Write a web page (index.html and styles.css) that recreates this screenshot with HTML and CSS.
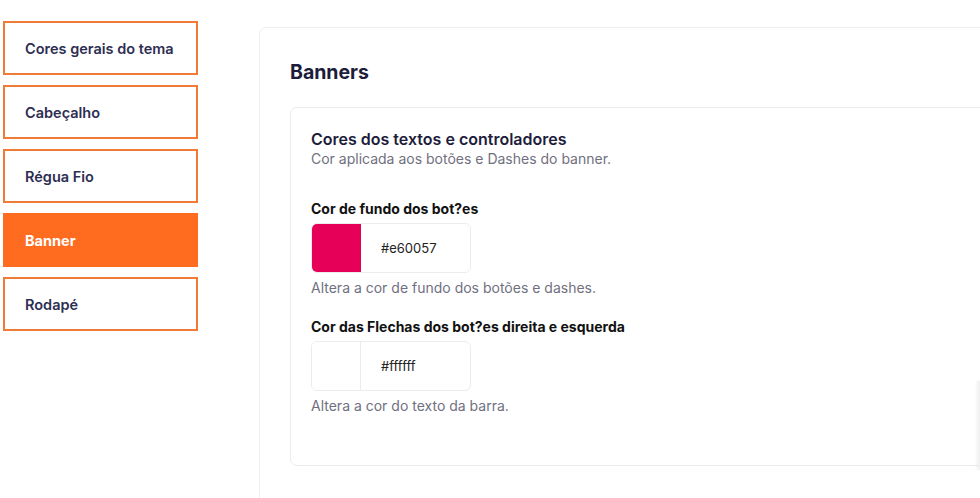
FILE: index.html
```html
<!DOCTYPE html>
<html>
<head>
    <link rel="stylesheet" href="styles.css">
</head>
<body>
    <div class="layout">
        <nav class="sidebar">
            <a class="nav-item">Cores gerais do tema</a>
            <a class="nav-item">Cabeçalho</a>
            <a class="nav-item">Régua Fio</a>
            <a class="nav-item active">Banner</a>
            <a class="nav-item">Rodapé</a>
        </nav>

        <main class="panel">
            <h2 class="panel-title">Banners</h2>

            <section class="card">
                <h3 class="card-title">Cores dos textos e controladores</h3>
                <p class="card-desc">Cor aplicada aos botões e Dashes do banner.</p>

                <div class="field first">
                    <label class="field-label">Cor de fundo dos bot?es</label>
                    <div class="color-input">
                        <span class="swatch swatch-pink"></span>
                        <span class="color-value">#e60057</span>
                    </div>
                    <p class="field-help">Altera a cor de fundo dos botões e dashes.</p>
                </div>

                <div class="field">
                    <label class="field-label">Cor das Flechas dos bot?es direita e esquerda</label>
                    <div class="color-input">
                        <span class="swatch swatch-white"></span>
                        <span class="color-value">#ffffff</span>
                    </div>
                    <p class="field-help">Altera a cor do texto da barra.</p>
                </div>
            </section>
        </main>
    </div>
    <div class="edge-handle"></div>
</body>
</html>
```

FILE: styles.css
```css
html, body {
    margin: 0;
    padding: 0;
    background: #fff;
    overflow: hidden;
    font-family: Inter, "Noto Sans", Arial, sans-serif;
}
.layout {
    display: flex;
    align-items: flex-start;
    width: 1100px;
}
.sidebar {
    display: flex;
    flex-direction: column;
    gap: 10px;
    width: 195px;
    padding: 21px 0 0 3px;
    flex-shrink: 0;
}
.nav-item {
    display: flex;
    align-items: center;
    box-sizing: border-box;
    height: 54px;
    padding-left: 20px;
    border: 2px solid #f07b37;
    font-size: 14.5px;
    font-weight: 600;
    color: #2d2e52;
    cursor: pointer;
}
.nav-item.active {
    background: #ff6b1f;
    border-color: #ff6b1f;
    color: #fff;
    font-weight: 700;
}
.panel {
    margin: 27px 0 0 61px;
    width: 760px;
    min-height: 500px;
    box-sizing: border-box;
    padding: 32px 30px 0 30px;
    border: 1px solid #eeeeee;
    border-radius: 7px;
}
.panel-title {
    margin: 0 0 23px;
    font-size: 19.5px;
    line-height: 24px;
    font-weight: 700;
    color: #1d1d3b;
}
.card {
    border: 1px solid #ececec;
    border-radius: 7px;
    padding: 21px 20px 49px;
}
.card-title {
    margin: 0;
    font-size: 16px;
    line-height: 20px;
    font-weight: 600;
    color: #1d1d3b;
}
.card-desc {
    margin: 0;
    font-size: 14px;
    line-height: 20px;
    color: #707080;
}
.field {
    margin-top: 20px;
}
.field.first {
    margin-top: 31px;
}
.field-label {
    display: block;
    font-size: 14px;
    line-height: 18px;
    font-weight: 700;
    color: #111;
}
.color-input {
    display: flex;
    align-items: center;
    box-sizing: border-box;
    width: 160px;
    height: 50px;
    margin-top: 5px;
    border: 1px solid #ececec;
    border-radius: 6px;
    overflow: hidden;
}
.swatch {
    width: 48px;
    height: 100%;
    border-right: 1px solid #ececec;
}
.swatch-pink {
    background: #e60057;
    border-right-color: #e60057;
}
.swatch-white {
    background: #fff;
}
.color-value {
    margin-left: 20px;
    font-size: 13px;
    color: #222;
}
.field-help {
    margin: 5px 0 0;
    font-size: 14px;
    line-height: 20px;
    color: #707080;
}
.edge-handle {
    position: absolute;
    right: 0;
    top: 381px;
    width: 2px;
    height: 89px;
    background: #f2f2f2;
    box-shadow: -1px 0 3px rgba(0, 0, 0, 0.08);
}
```
